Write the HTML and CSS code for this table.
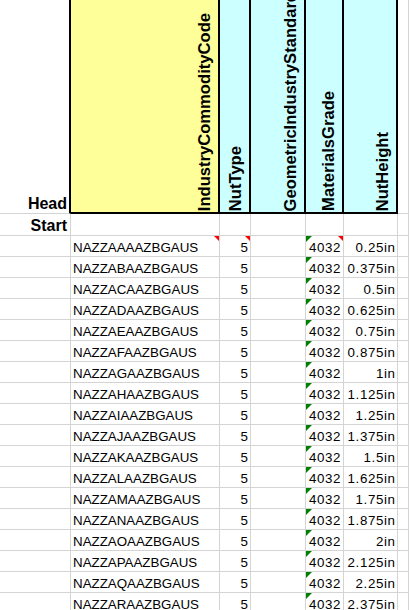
FILE: index.html
```html
<!DOCTYPE html>
<html>
<head>
<meta charset="utf-8">
<link rel="stylesheet" href="styles.css">
</head>
<body>
<div class="sheet">
  <div class="cell ha"><span class="bold">Head</span></div>
  <div class="cell hc yellow"><span class="vt">IndustryCommodityCode</span></div>
  <div class="cell hc cyan"><span class="vt">NutType</span></div>
  <div class="cell hc cyan"><span class="vt">GeometricIndustryStandard</span></div>
  <div class="cell hc cyan"><span class="vt">MaterialsGrade</span></div>
  <div class="cell hc cyan"><span class="vt">NutHeight</span></div>
  <div class="cell"></div>

  <div class="cell ra"><span class="bold">Start</span></div>
  <div class="cell"></div>
  <div class="cell"></div>
  <div class="cell"></div>
  <div class="cell"></div>
  <div class="cell"></div>
  <div class="cell"></div>

  <div class="cell"></div><div class="cell txt red">NAZZAAAAZBGAUS</div><div class="cell num red">5</div><div class="cell"></div><div class="cell txt green red">4032</div><div class="cell num">0.25in</div><div class="cell"></div>
  <div class="cell"></div><div class="cell txt">NAZZABAAZBGAUS</div><div class="cell num">5</div><div class="cell"></div><div class="cell txt green">4032</div><div class="cell num">0.375in</div><div class="cell"></div>
  <div class="cell"></div><div class="cell txt">NAZZACAAZBGAUS</div><div class="cell num">5</div><div class="cell"></div><div class="cell txt green">4032</div><div class="cell num">0.5in</div><div class="cell"></div>
  <div class="cell"></div><div class="cell txt">NAZZADAAZBGAUS</div><div class="cell num">5</div><div class="cell"></div><div class="cell txt green">4032</div><div class="cell num">0.625in</div><div class="cell"></div>
  <div class="cell"></div><div class="cell txt">NAZZAEAAZBGAUS</div><div class="cell num">5</div><div class="cell"></div><div class="cell txt green">4032</div><div class="cell num">0.75in</div><div class="cell"></div>
  <div class="cell"></div><div class="cell txt">NAZZAFAAZBGAUS</div><div class="cell num">5</div><div class="cell"></div><div class="cell txt green">4032</div><div class="cell num">0.875in</div><div class="cell"></div>
  <div class="cell"></div><div class="cell txt">NAZZAGAAZBGAUS</div><div class="cell num">5</div><div class="cell"></div><div class="cell txt green">4032</div><div class="cell num">1in</div><div class="cell"></div>
  <div class="cell"></div><div class="cell txt">NAZZAHAAZBGAUS</div><div class="cell num">5</div><div class="cell"></div><div class="cell txt green">4032</div><div class="cell num">1.125in</div><div class="cell"></div>
  <div class="cell"></div><div class="cell txt">NAZZAIAAZBGAUS</div><div class="cell num">5</div><div class="cell"></div><div class="cell txt green">4032</div><div class="cell num">1.25in</div><div class="cell"></div>
  <div class="cell"></div><div class="cell txt">NAZZAJAAZBGAUS</div><div class="cell num">5</div><div class="cell"></div><div class="cell txt green">4032</div><div class="cell num">1.375in</div><div class="cell"></div>
  <div class="cell"></div><div class="cell txt">NAZZAKAAZBGAUS</div><div class="cell num">5</div><div class="cell"></div><div class="cell txt green">4032</div><div class="cell num">1.5in</div><div class="cell"></div>
  <div class="cell"></div><div class="cell txt">NAZZALAAZBGAUS</div><div class="cell num">5</div><div class="cell"></div><div class="cell txt green">4032</div><div class="cell num">1.625in</div><div class="cell"></div>
  <div class="cell"></div><div class="cell txt">NAZZAMAAZBGAUS</div><div class="cell num">5</div><div class="cell"></div><div class="cell txt green">4032</div><div class="cell num">1.75in</div><div class="cell"></div>
  <div class="cell"></div><div class="cell txt">NAZZANAAZBGAUS</div><div class="cell num">5</div><div class="cell"></div><div class="cell txt green">4032</div><div class="cell num">1.875in</div><div class="cell"></div>
  <div class="cell"></div><div class="cell txt">NAZZAOAAZBGAUS</div><div class="cell num">5</div><div class="cell"></div><div class="cell txt green">4032</div><div class="cell num">2in</div><div class="cell"></div>
  <div class="cell"></div><div class="cell txt">NAZZAPAAZBGAUS</div><div class="cell num">5</div><div class="cell"></div><div class="cell txt green">4032</div><div class="cell num">2.125in</div><div class="cell"></div>
  <div class="cell"></div><div class="cell txt">NAZZAQAAZBGAUS</div><div class="cell num">5</div><div class="cell"></div><div class="cell txt green">4032</div><div class="cell num">2.25in</div><div class="cell"></div>
  <div class="cell"></div><div class="cell txt">NAZZARAAZBGAUS</div><div class="cell num">5</div><div class="cell"></div><div class="cell txt green">4032</div><div class="cell num">2.375in</div><div class="cell"></div>
</div>
</body>
</html>
```

FILE: styles.css
```css
html, body {
  margin: 0;
  padding: 0;
  background: #ffffff;
  overflow: hidden;
}

.sheet {
  display: grid;
  grid-template-columns: 71px 149px 31px 55px 38px 54px 1fr;
  grid-template-rows: 214px 22px;
  grid-auto-rows: 21px;
  width: 409px;
  font-family: "Liberation Sans", Arial, sans-serif;
  font-size: 13.33px;
  color: #000;
}

.cell {
  box-sizing: border-box;
  position: relative;
  display: flex;
  align-items: flex-end;
  border-right: 1px solid #d4d4d4;
  border-bottom: 1px solid #d4d4d4;
  white-space: nowrap;
  overflow: hidden;
  line-height: 15px;
  padding-bottom: 1px;
}

.bold {
  font-weight: bold;
  font-size: 16px;
  line-height: 18px;
}

.ha {
  justify-content: flex-end;
  border-right: 2px solid #000;
  padding-right: 2px;
  padding-bottom: 0;
}

.ra {
  justify-content: flex-end;
  padding-right: 3px;
  padding-bottom: 0;
}

.hc {
  justify-content: flex-end;
  border-right: 2px solid #000;
  border-bottom: 2px solid #000;
  padding-right: 4px;
  padding-bottom: 1px;
}

.yellow { background: #ffff99; }
.cyan { background: #ccffff; }

.vt {
  writing-mode: vertical-rl;
  transform: rotate(180deg);
  font-weight: bold;
  font-size: 16.6px;
  line-height: 18px;
  white-space: nowrap;
}

.txt {
  padding-left: 2px;
}

.num {
  justify-content: flex-end;
  padding-right: 1.5px;
  letter-spacing: 0.6px;
}

.red::after {
  content: "";
  position: absolute;
  top: 0;
  right: 0;
  border-style: solid;
  border-width: 0 5px 5px 0;
  border-color: transparent #ff0000 transparent transparent;
}

.green::before {
  content: "";
  position: absolute;
  top: 0;
  left: 0;
  border-style: solid;
  border-width: 6px 6px 0 0;
  border-color: #008000 transparent transparent transparent;
}

.green {
  padding-left: 3px;
  letter-spacing: 0.6px;
}
```
